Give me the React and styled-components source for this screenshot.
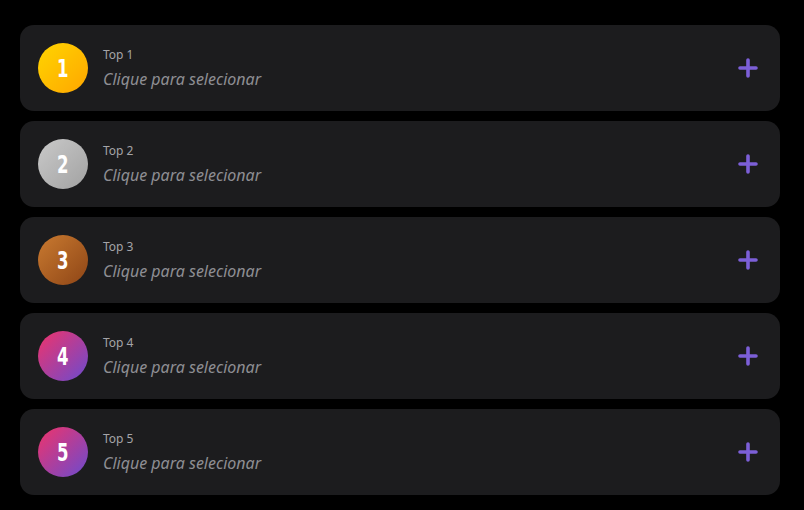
import React from "react";
import styled, { createGlobalStyle } from "styled-components";

const Global = createGlobalStyle`
  html, body { margin: 0; padding: 0; background: #000; }
  body { font-family: "Noto Sans", "Lato", sans-serif; }
`;

const Page = styled.div`
  padding: 25px 24px 15px 20px;
  display: flex;
  flex-direction: column;
  gap: 10px;
`;

const Card = styled.div`
  display: flex;
  align-items: center;
  gap: 15px;
  height: 86px;
  box-sizing: border-box;
  padding: 18px 22px 18px 18px;
  background: #1c1c1e;
  border-radius: 14px;
  cursor: pointer;
`;

const Badge = styled.div`
  width: 50px;
  height: 50px;
  flex: none;
  border-radius: 50%;
  display: flex;
  align-items: center;
  justify-content: center;
  background: ${(p) => p.$bg};
`;

const Digit = styled.span`
  display: inline-block;
  color: #fff;
  font-family: "DejaVu Sans", sans-serif;
  font-weight: 700;
  font-size: 25px;
  line-height: 1;
  transform: scaleX(0.66);
`;

const Info = styled.div`
  flex: 1;
  display: flex;
  flex-direction: column;
  gap: 7px;
`;

const Label = styled.div`
  font-size: 12px;
  line-height: 15px;
  color: #a4a4a8;
`;

const Placeholder = styled.div`
  font-size: 16px;
  line-height: 20px;
  font-style: italic;
  color: #8e8e93;
`;

const AddIcon = styled.svg`
  width: 20px;
  height: 20px;
  flex: none;
`;

const items = [
  { n: 1, bg: "linear-gradient(135deg, #ffd500, #ffa600)" },
  { n: 2, bg: "linear-gradient(135deg, #c9c9c9, #a2a2a2)" },
  { n: 3, bg: "linear-gradient(135deg, #c97a30, #8e4516)" },
  { n: 4, bg: "linear-gradient(135deg, #f0336a, #6b4bcf)" },
  { n: 5, bg: "linear-gradient(135deg, #f0336a, #6b4bcf)" },
];

export default function App() {
  return (
    <>
      <Global />
      <Page>
        {items.map((it) => (
          <Card key={it.n}>
            <Badge $bg={it.bg}>
              <Digit>{it.n}</Digit>
            </Badge>
            <Info>
              <Label>Top {it.n}</Label>
              <Placeholder>Clique para selecionar</Placeholder>
            </Info>
            <AddIcon viewBox="0 0 20 20">
              <path
                d="M10 2 V18 M2 10 H18"
                stroke="#7c5fd8"
                strokeWidth="3.6"
                strokeLinecap="round"
                fill="none"
              />
            </AddIcon>
          </Card>
        ))}
      </Page>
    </>
  );
}
